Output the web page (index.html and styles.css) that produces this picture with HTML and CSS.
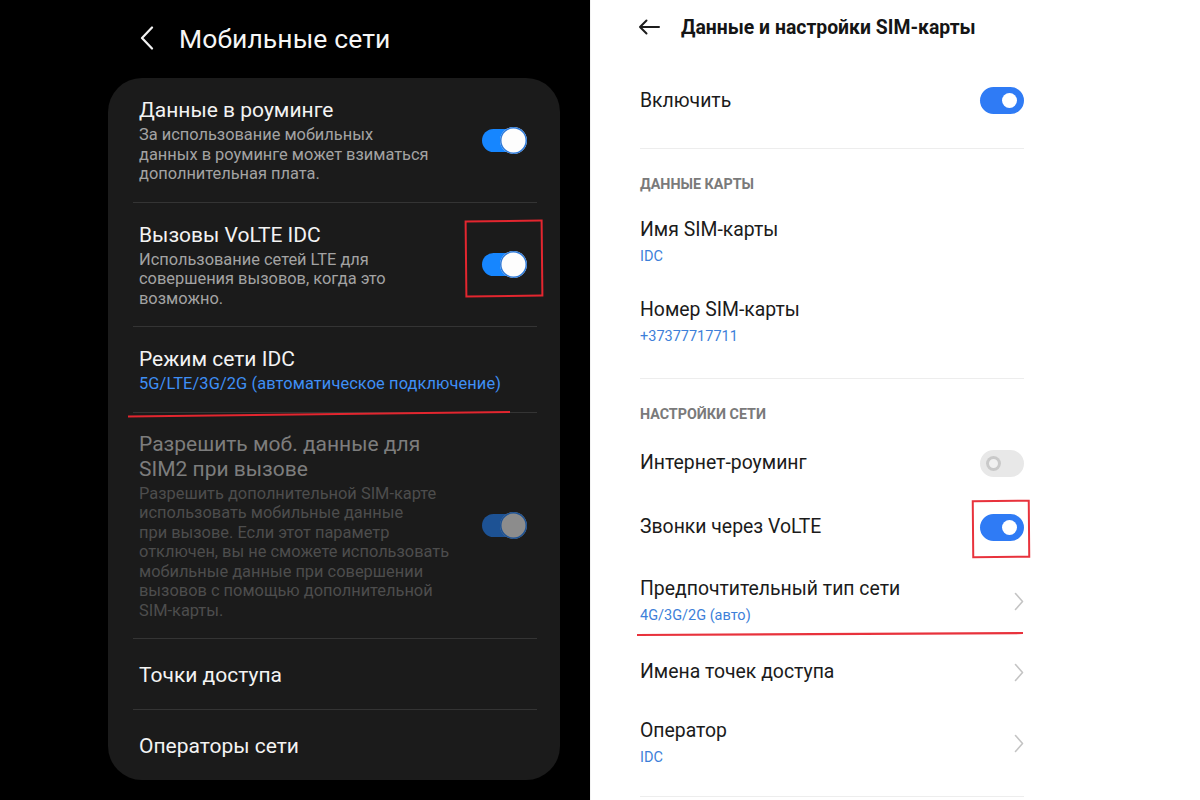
FILE: index.html
```html
<!DOCTYPE html>
<html lang="ru">
<head>
<meta charset="utf-8">
<title>Мобильные сети</title>
<link rel="stylesheet" href="styles.css">
</head>
<body>
<div class="screen">
  <section class="dark">
    <header class="d-head">
      <svg class="d-back" width="14" height="24" viewBox="0 0 14 24"><polyline points="12,1.5 2,12 12,22.5" fill="none" stroke="#f2f2f2" stroke-width="2.2" stroke-linecap="round" stroke-linejoin="round"/></svg>
      <h1 class="d-h1">Мобильные сети</h1>
    </header>
    <div class="d-card">
      <div class="d-row">
        <div class="d-text">
          <div class="d-title">Данные в роуминге</div>
          <div class="d-sub">За использование мобильных<br>данных в роуминге может взиматься<br>дополнительная плата.</div>
        </div>
        <span class="d-toggle"></span>
      </div>
      <div class="d-row">
        <div class="d-text">
          <div class="d-title">Вызовы VoLTE IDC</div>
          <div class="d-sub">Использование сетей LTE для<br>совершения вызовов, когда это<br>возможно.</div>
        </div>
        <span class="d-toggle"><span class="mark mark-left"></span></span>
      </div>
      <div class="d-row">
        <div class="d-text">
          <div class="d-title">Режим сети IDC</div>
          <div class="d-link">5G/LTE/3G/2G (автоматическое подключение)</div>
        </div>
        <svg class="underline underline-left" width="384" height="8" viewBox="0 0 384 8"><line x1="0" y1="6.5" x2="382" y2="2" stroke="#e3262f" stroke-width="2.2"/></svg>
      </div>
      <div class="d-row is-dim">
        <div class="d-text">
          <div class="d-title d-title-2">Разрешить моб. данные для<br>SIM2 при вызове</div>
          <div class="d-sub">Разрешить дополнительной SIM-карте<br>использовать мобильные данные<br>при вызове. Если этот параметр<br>отключен, вы не сможете использовать<br>мобильные данные при совершении<br>вызовов с помощью дополнительной<br>SIM-карты.</div>
        </div>
        <span class="d-toggle d-toggle-dim"></span>
      </div>
      <div class="d-row d-row-single">
        <div class="d-title">Точки доступа</div>
      </div>
      <div class="d-row d-row-single d-row-last">
        <div class="d-title">Операторы сети</div>
      </div>
    </div>
  </section>

  <section class="light">
    <header class="l-head">
      <svg class="l-back" width="22" height="16" viewBox="0 0 22 16"><path d="M21 8H2M8.5 1.5L2 8l6.5 6.5" fill="none" stroke="#1d1d1d" stroke-width="2" stroke-linecap="round" stroke-linejoin="round"/></svg>
      <h1 class="l-h1">Данные и настройки SIM-карты</h1>
    </header>

    <div class="l-block l-block-first">
      <div class="l-row l-row-enable">
        <span class="l-title">Включить</span>
        <span class="l-toggle"></span>
      </div>
    </div>

    <div class="l-block">
      <div class="l-label">ДАННЫЕ КАРТЫ</div>
      <div class="l-row l-row-two">
        <div class="l-text">
          <div class="l-title">Имя SIM-карты</div>
          <div class="l-sub">IDC</div>
        </div>
      </div>
      <div class="l-row l-row-two">
        <div class="l-text">
          <div class="l-title">Номер SIM-карты</div>
          <div class="l-sub">+37377717711</div>
        </div>
      </div>
    </div>

    <div class="l-block l-block-last">
      <div class="l-label l-label-2">НАСТРОЙКИ СЕТИ</div>
      <div class="l-row l-row-one">
        <span class="l-title">Интернет-роуминг</span>
        <span class="l-toggle l-toggle-off"></span>
      </div>
      <div class="l-row l-row-one">
        <span class="l-title">Звонки через VoLTE</span>
        <span class="l-toggle"><span class="mark mark-right"></span></span>
      </div>
      <div class="l-row l-row-two l-row-nav">
        <div class="l-text">
          <div class="l-title">Предпочтительный тип сети</div>
          <div class="l-sub">4G/3G/2G (авто)</div>
        </div>
        <svg class="chev" width="10" height="19" viewBox="0 0 10 19"><polyline points="1.5,1.5 8.5,9.5 1.5,17.5" fill="none" stroke="#c4c4c4" stroke-width="1.6" stroke-linecap="round" stroke-linejoin="round"/></svg>
        <svg class="underline underline-right" width="388" height="6" viewBox="0 0 388 6"><line x1="0" y1="4" x2="386" y2="2" stroke="#e8323c" stroke-width="2.2"/></svg>
      </div>
      <div class="l-row l-row-single">
        <span class="l-title">Имена точек доступа</span>
        <svg class="chev" width="10" height="19" viewBox="0 0 10 19"><polyline points="1.5,1.5 8.5,9.5 1.5,17.5" fill="none" stroke="#c4c4c4" stroke-width="1.6" stroke-linecap="round" stroke-linejoin="round"/></svg>
      </div>
      <div class="l-row l-row-two l-row-nav">
        <div class="l-text">
          <div class="l-title">Оператор</div>
          <div class="l-sub">IDC</div>
        </div>
        <svg class="chev" width="10" height="19" viewBox="0 0 10 19"><polyline points="1.5,1.5 8.5,9.5 1.5,17.5" fill="none" stroke="#c4c4c4" stroke-width="1.6" stroke-linecap="round" stroke-linejoin="round"/></svg>
      </div>
    </div>
  </section>
</div>
</body>
</html>
```
FILE: styles.css
```css
* { box-sizing: border-box; }
html, body { margin: 0; padding: 0; }
body {
  width: 1200px;
  height: 800px;
  overflow: hidden;
  font-family: Roboto, "Noto Sans", "DejaVu Sans", sans-serif;
}
.screen {
  display: flex;
  width: 1200px;
  height: 800px;
}

/* ---------- dark (left) ---------- */
.dark {
  width: 590px;
  height: 800px;
  background: #000;
  color: #f4f4f4;
}
.d-head {
  height: 78px;
  display: flex;
  align-items: center;
  padding-left: 140px;
  padding-bottom: 2px;
}
.d-back { flex: none; }
.d-h1 {
  margin: 0 0 0 25px;
  font-size: 26.5px;
  font-weight: 400;
  letter-spacing: 0.1px;
  color: #f6f6f6;
}
.d-card {
  margin-left: 108px;
  width: 452px;
  height: 702px;
  background: #1b1b1b;
  border-radius: 34px;
  display: flex;
  flex-direction: column;
}
.d-row {
  position: relative;
  margin: 0 23px 0 25px;
  padding: 19px 10px 18px 6px;
  display: flex;
  align-items: center;
  justify-content: space-between;
  border-top: 1px solid #343434;
}
.d-row:first-child { border-top: none; }
.d-row-single { padding-top: 23px; padding-bottom: 21px; }
.d-row-last { padding-bottom: 19px; }
.d-title {
  font-size: 21px;
  line-height: 26px;
  color: #f3f3f3;
}
.d-title-2 { line-height: 25px; }
.d-sub {
  margin-top: 2px;
  font-size: 16.4px;
  line-height: 19.5px;
  color: #a3a3a3;
}
.d-link {
  margin-top: 2px;
  font-size: 16.4px;
  line-height: 19.5px;
  letter-spacing: 0.1px;
  color: #3f8ff5;
}
.is-dim .d-title { color: #7d7d7d; }
.is-dim .d-sub { color: #4d4d4d; }

.d-toggle {
  position: relative;
  flex: none;
  width: 45px;
  height: 27px;
}
.d-toggle::before {
  content: "";
  position: absolute;
  left: 0;
  top: 2px;
  width: 40px;
  height: 23px;
  border-radius: 12px;
  background: #1686ff;
}
.d-toggle::after {
  content: "";
  position: absolute;
  right: 0;
  top: 0;
  width: 27px;
  height: 27px;
  border-radius: 50%;
  background: #fdfdfd;
  box-shadow: inset 0 0 0 1.5px #2f7ad8;
}
.d-toggle-dim::before { background: #1d5294; }
.d-toggle-dim::after { background: #8c8c8c; box-shadow: inset 0 0 0 1.5px #1d5294; }

.mark {
  position: absolute;
  border: 2px solid #e3262f;
  z-index: 2;
}
.mark-left {
  left: -17px;
  right: -16px;
  top: -31px;
  bottom: -19px;
  transform: rotate(-0.6deg);
}
.mark-right {
  left: -8px;
  right: -6px;
  top: -14px;
  bottom: -17px;
  border-color: #e8323c;
  transform: rotate(-0.5deg);
}
.underline {
  position: absolute;
  z-index: 2;
}
.underline-left {
  left: -5px;
  bottom: -6px;
}
.underline-right {
  left: -3px;
  bottom: 6px;
}

/* ---------- light (right) ---------- */
.light {
  width: 610px;
  height: 800px;
  background: #fff;
  color: #1b1b1b;
  border-left: 1px solid #f3f3f3;
  padding-left: 49px;
}
.l-head {
  height: 54px;
  display: flex;
  align-items: center;
  margin-left: -2px;
}
.l-back { flex: none; }
.l-h1 {
  margin: 0 0 0 21px;
  font-size: 19.4px;
  font-weight: 700;
  color: #151515;
  letter-spacing: 0;
}
.l-block {
  width: 384px;
  border-bottom: 1px solid #ededed;
  padding-bottom: 16px;
}
.l-block-first { padding-bottom: 0; }
.l-block-last { padding-bottom: 11px; }
.l-label {
  padding-top: 27px;
  margin-bottom: 10px;
  font-size: 14.3px;
  line-height: 16px;
  font-weight: 700;
  color: #7a7a7a;
  letter-spacing: 0;
}
.l-label-2 { margin-bottom: 9px; }
.l-row {
  position: relative;
  display: flex;
  align-items: center;
  justify-content: space-between;
}
.l-row-enable { padding: 33px 0 34px; }
.l-row-two { padding: 16px 0; }
.l-row-nav { padding: 18px 0; }
.l-row-one { height: 64px; }
.l-row-single { height: 58px; }
.l-text { display: flex; flex-direction: column; }
.l-title {
  font-size: 19.4px;
  line-height: 24px;
  color: #1b1b1b;
}
.l-sub {
  margin-top: 6px;
  font-size: 14.5px;
  line-height: 18px;
  color: #3d7fd9;
}
.l-toggle {
  position: relative;
  flex: none;
  width: 44px;
  height: 27px;
  border-radius: 14px;
  background: #2f7bf5;
}
.l-toggle::after {
  content: "";
  position: absolute;
  right: 7px;
  top: 6px;
  width: 15px;
  height: 15px;
  border-radius: 50%;
  background: #fff;
}
.l-toggle-off { background: #e8e8e8; }
.l-toggle-off::after {
  right: auto;
  left: 6px;
  width: 15px;
  height: 15px;
  background: #f0f0f0;
  box-shadow: inset 0 0 0 3px #c9c9c9;
}
.chev { flex: none; }
```
